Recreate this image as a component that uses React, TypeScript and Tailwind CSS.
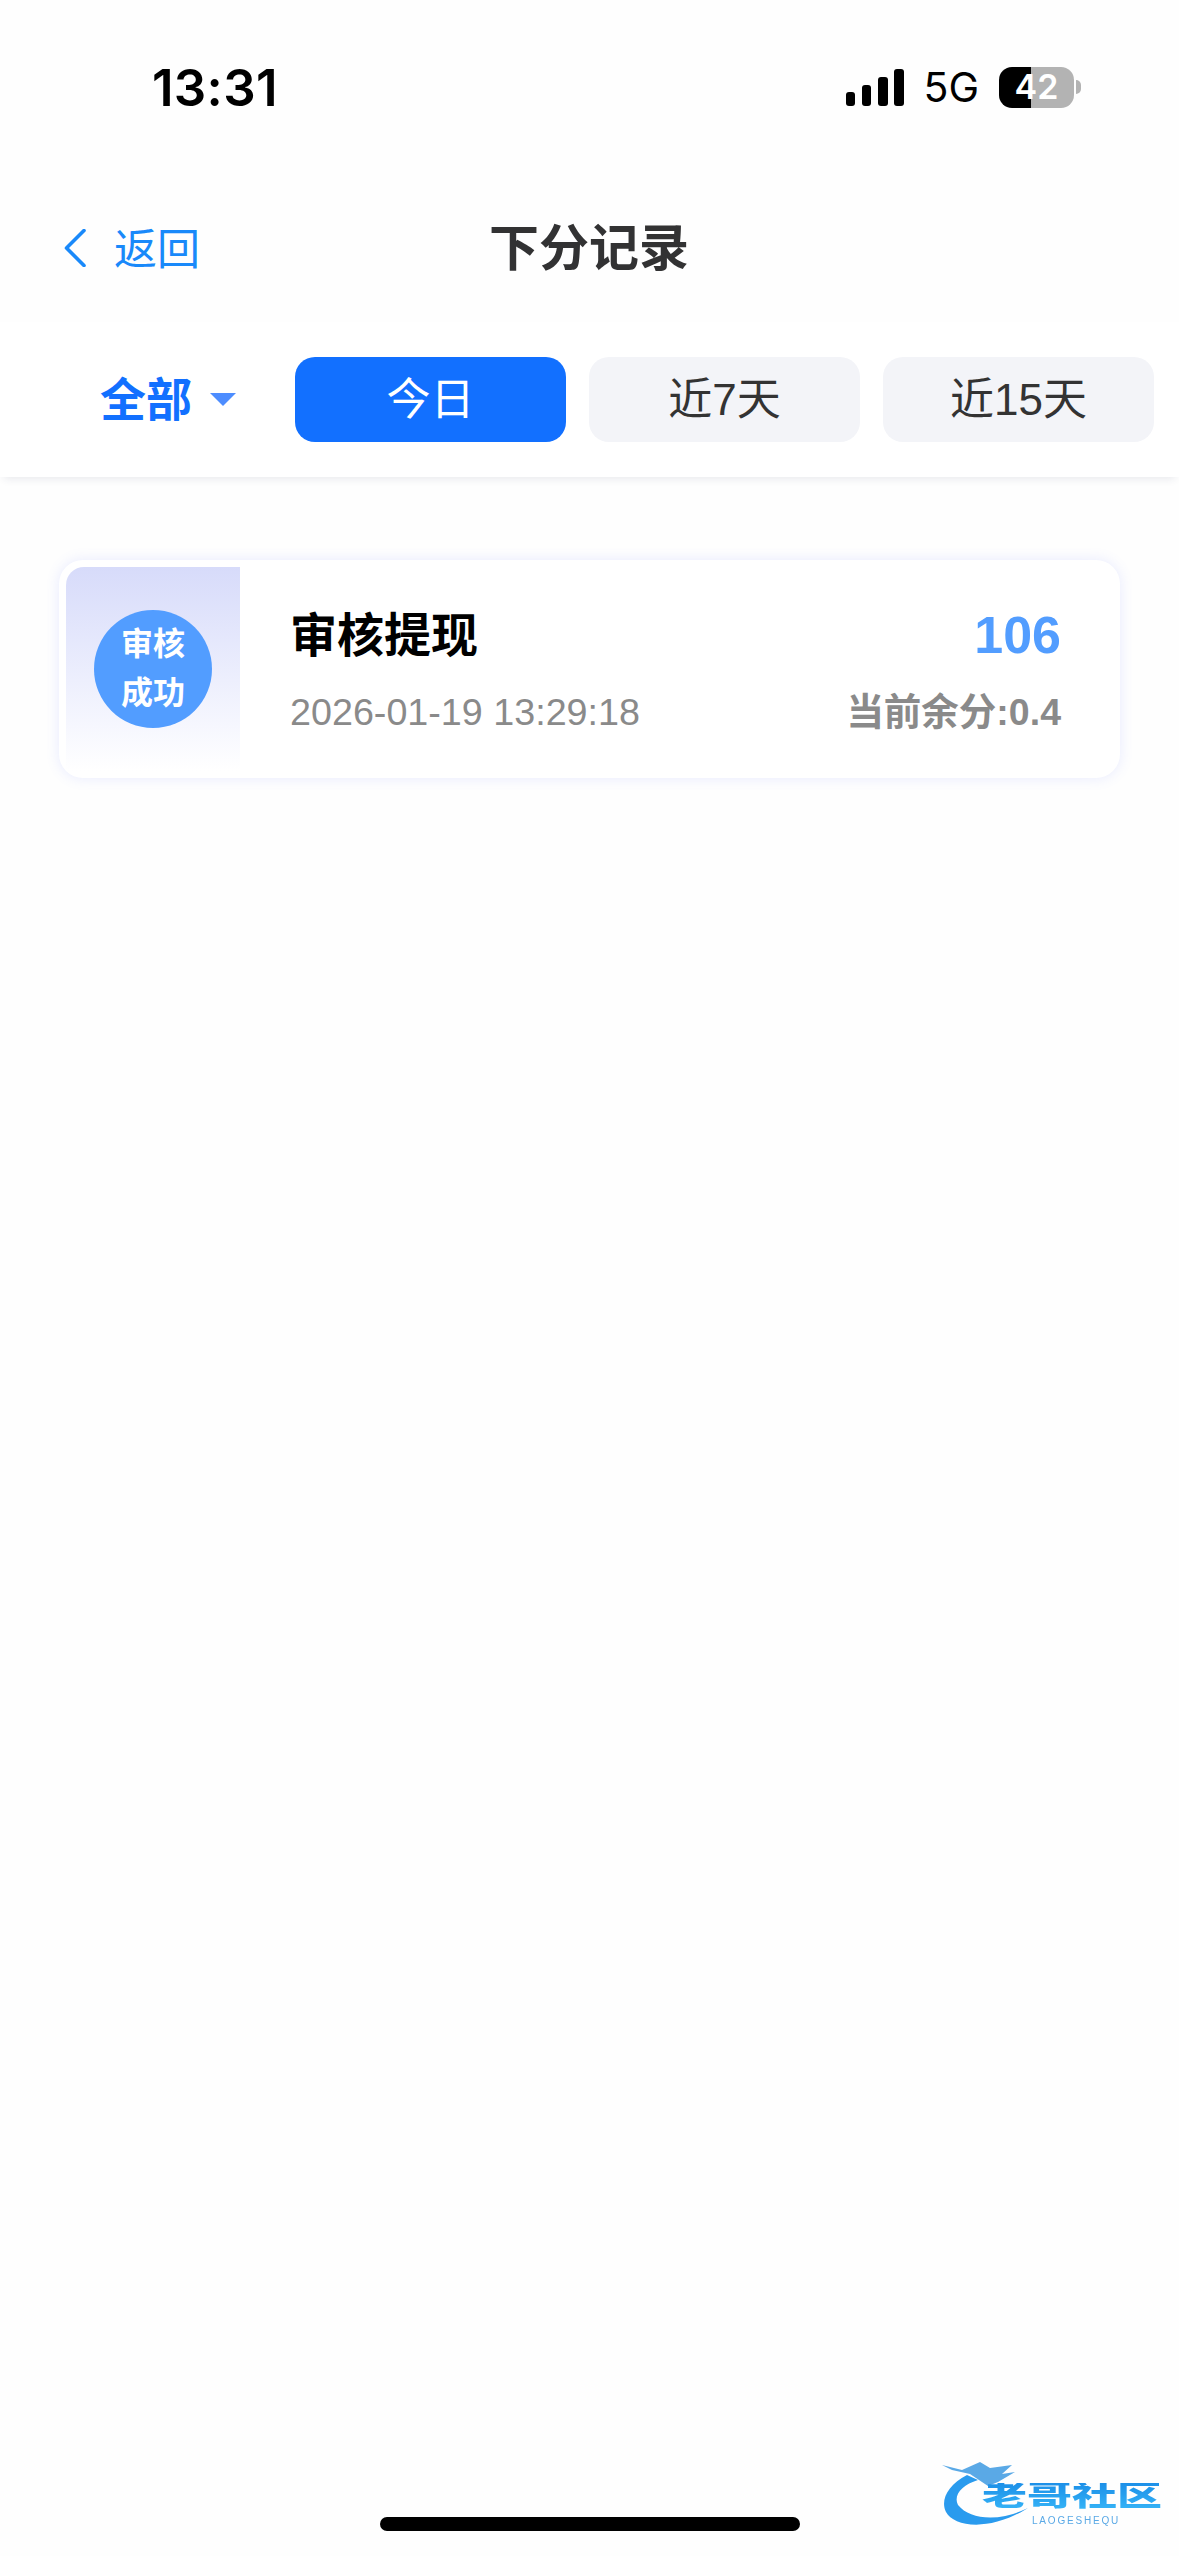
const cjk = "font-['Liberation_Sans','Noto_Sans_CJK_SC',sans-serif]";

const ranges = ["近7天", "近15天"];

const StatusBar = () => (
  <div className="h-[174px] flex items-center justify-between pl-[152px] pr-[98px]">
    <span className="font-['Inter',sans-serif] font-semibold text-[51px] leading-none text-black tracking-[0.3px]">13:31</span>
    <div className="flex items-center">
      <svg width="58" height="37" viewBox="0 0 58 37" className="fill-black">
        <rect x="0" y="23" width="9" height="14" rx="3" />
        <rect x="16" y="16" width="9" height="21" rx="3" />
        <rect x="32" y="8" width="10" height="29" rx="3" />
        <rect x="48" y="0" width="10" height="37" rx="3" />
      </svg>
      <span className="ml-[19px] font-['Inter',sans-serif] font-normal text-[41px] leading-none text-black">5G</span>
      <div className="ml-[20px] w-[75px] h-[41px] rounded-[13px] flex items-center justify-center bg-[linear-gradient(90deg,#000_43%,#b3b3b3_43%)]">
        <span className="font-['Inter',sans-serif] font-semibold text-[34px] leading-none text-white">42</span>
      </div>
      <div className="ml-[2px] w-[5px] h-[14px] rounded-r-full bg-[#b3b3b3]" />
    </div>
  </div>
);

const NavBar = () => (
  <div className="h-[148px] relative flex items-center pl-[64px]">
    <svg width="22" height="38" viewBox="0 0 22 38" fill="none" className="stroke-[#1989fa]">
      <path d="M20 1.5 L2.5 19 L20 36.5" strokeWidth="3.6" strokeLinecap="round" strokeLinejoin="round" />
    </svg>
    <span className="ml-[28px] pt-[4px] text-[43px] leading-none text-[#1989fa]">返回</span>
    <h1 className="absolute left-[489px] pt-[1px] text-[50px] leading-none font-bold text-[#323233]">下分记录</h1>
  </div>
);

const FilterRow = () => (
  <div className="h-[155px] pt-[35px] pb-[35px] flex items-center bg-white shadow-[0_6px_8px_-4px_rgba(40,50,90,0.1)]">
    <div className="w-[295px] pl-[100px] flex items-center">
      <span className="text-[46px] leading-none font-bold text-[#1270ff]">全部</span>
      <svg width="26" height="13" viewBox="0 0 26 13" className="ml-[18px] fill-[#4d8dff]">
        <path d="M0 0 H26 L13 13 Z" />
      </svg>
    </div>
    <div className="flex gap-[23px]">
      <button className="w-[271px] h-[85px] rounded-[20px] bg-[#1270ff] text-white text-[44px] leading-none">今日</button>
      {ranges.map((label) => (
        <button key={label} className="w-[271px] h-[85px] rounded-[20px] bg-[#f3f4f8] text-[#333] text-[44px] leading-none">
          {label}
        </button>
      ))}
    </div>
  </div>
);

const RecordCard = () => (
  <div className="mx-[59px] h-[218px] p-[7px] rounded-[24px] bg-white flex shadow-[0_0_14px_rgba(90,110,255,0.14)]">
    <div className="w-[174px] rounded-tl-[18px] flex items-center justify-center bg-linear-to-b from-[#d7dbfa] to-white">
      <div className="w-[118px] h-[118px] rounded-full bg-[#529dff] flex items-center justify-center text-center text-white text-[32px] leading-[49px] font-bold">
        审核
        <br />
        成功
      </div>
    </div>
    <div className="flex-1 pl-[50px] pr-[52px] pt-[37px]">
      <div className="flex items-center justify-between h-[62px]">
        <span className="text-[47px] leading-none font-bold text-black">审核提现</span>
        <span className="text-[52px] leading-none font-bold text-[#529dff]">106</span>
      </div>
      <div className="mt-[22px] flex items-center justify-between h-[50px]">
        <span className="text-[37.7px] leading-none text-[#8a8a8a]">2026-01-19 13:29:18</span>
        <span className="text-[37.5px] leading-none font-bold text-[#8a8a8a]">当前余分:0.4</span>
      </div>
    </div>
  </div>
);

const Watermark = () => (
  <div className="absolute left-[940px] top-[2450px] w-[225px] h-[80px] blur-[0.7px]">
    <svg width="100" height="80" viewBox="0 0 100 80" className="absolute left-0 top-0">
      <path d="M27 25 C8 35 0 50 6 62 C14 77 50 82 88 58 C60 72 30 70 18 55 C13 45 22 35 38 30 Z" fill="#2a9bee" />
      <path d="M2 15 L22 20 L40 12 L50 18 L72 15 L62 24 L75 22 L58 32 L48 36 L30 24 L12 20 Z" fill="#5aa9e6" />
    </svg>
    <div className="absolute left-[42px] top-[24px] text-[45px] leading-[45px] font-black whitespace-nowrap scale-y-[0.62] bg-linear-to-b from-[#1c8fe8] to-[#35b4f7] bg-clip-text text-transparent">
      老哥社区
    </div>
    <div className="absolute left-[92px] top-[66px] text-[10px] leading-[10px] tracking-[1.8px] text-[#5aa9e6] whitespace-nowrap">
      LAOGESHEQU
    </div>
  </div>
);

const App = () => {
  return (
    <div className={`relative w-[1179px] h-[2556px] overflow-hidden bg-[#fefefe] ${cjk}`}>
      <StatusBar />
      <NavBar />
      <FilterRow />
      <div className="pt-[83px]">
        <RecordCard />
      </div>
      <Watermark />
      <div className="absolute left-[380px] bottom-[25px] w-[420px] h-[14px] rounded-full bg-black" />
    </div>
  );
};

export default App;
